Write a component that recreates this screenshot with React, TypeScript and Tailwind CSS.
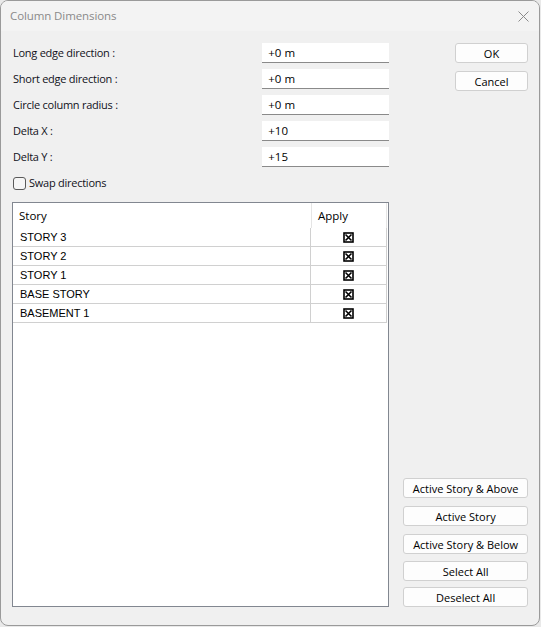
import React from 'react';

const fields = [
  { label: 'Long edge direction :', value: '+0 m' },
  { label: 'Short edge direction :', value: '+0 m' },
  { label: 'Circle column radius :', value: '+0 m' },
  { label: 'Delta X :', value: '+10' },
  { label: 'Delta Y :', value: '+15' },
];

const stories = ['STORY 3', 'STORY 2', 'STORY 1', 'BASE STORY', 'BASEMENT 1'];

const ui = { fontFamily: '"Open Sans", "Noto Sans", sans-serif' };
const classic = { fontFamily: '"Liberation Sans", Arial, sans-serif' };

function CheckedBox() {
  return (
    <svg width="11" height="11" viewBox="0 0 11 11" className="block">
      <rect x="1" y="1" width="9" height="9" fill="white" stroke="black" strokeWidth="1.6" />
      <path d="M2.5 2.5 L8.5 8.5 M8.5 2.5 L2.5 8.5" stroke="black" strokeWidth="1.6" />
    </svg>
  );
}

function Btn({ children, className = '' }: { children: React.ReactNode; className?: string }) {
  return (
    <button
      className={`h-[20px] rounded-[3px] border border-[#d0d0d0] bg-[#fdfdfd] text-[11px] leading-none text-black flex items-center justify-center ${className}`}
      style={ui}
    >
      {children}
    </button>
  );
}

export default function App() {
  return (
    <div className="w-[541px] h-[627px] bg-[#e9e9e9]">
      <div className="w-[540px] h-[626px] rounded-[8px] border border-[#9a9a9a] bg-[#f0f0f0] overflow-hidden flex flex-col">
        {/* Title bar */}
        <div className="h-[30px] bg-[#f3f3f3] flex items-center justify-between pl-[9px] pr-[10px] shrink-0">
          <span className="text-[11.5px] tracking-[-0.1px] text-[#8a8a8a]" style={ui}>Column Dimensions</span>
          <svg width="11" height="11" viewBox="0 0 11 11">
            <path d="M0.5 0.5 L10.5 10.5 M10.5 0.5 L0.5 10.5" stroke="#8a8a8a" strokeWidth="1" />
          </svg>
        </div>

        {/* Body */}
        <div className="flex-1 flex pl-[11px] pr-[11px] pt-[12px] pb-[18px]">
          {/* Left column */}
          <div className="w-[378px] flex flex-col">
            <div className="flex flex-col gap-[6px]">
              {fields.map((f) => (
                <div key={f.label} className="h-[20px] flex items-center justify-between">
                  <span className="text-[11px] tracking-[-0.25px] text-[#101020] pl-[1px] pt-[1px]" style={ui}>{f.label}</span>
                  <div
                    className="w-[127px] h-[20px] bg-white border-b border-[#8a8a8a] flex items-center pl-[6px] text-[11.5px] text-black"
                    style={ui}
                  >
                    {f.value}
                  </div>
                </div>
              ))}
            </div>

            <label className="flex items-center gap-[3px] mt-[10px] h-[13px] pl-[1px]">
              <span className="w-[13px] h-[13px] rounded-[3px] border border-[#5a5a5a] bg-[#f6f6f6]" />
              <span className="text-[11px] tracking-[-0.25px] text-[#101020]" style={ui}>Swap directions</span>
            </label>

            {/* Story table */}
            <div className="mt-[12px] flex-1 bg-white border border-[#828790] pr-[1px]">
              <div className="flex h-[25px]">
                <div className="w-[299px] flex items-center pl-[6px] text-[11.5px] text-black border-r border-[#e5e5e5]" style={ui}>
                  Story
                </div>
                <div className="flex-1 flex items-center pl-[6px] text-[11.5px] text-black border-r border-[#e5e5e5]" style={ui}>
                  Apply
                </div>
              </div>
              {stories.map((s) => (
                <div key={s} className="flex h-[19px] border-b border-[#d0d0d0]">
                  <div className="w-[298px] flex items-center pl-[7px] text-[11px] text-black border-r border-[#d0d0d0]" style={classic}>
                    {s}
                  </div>
                  <div className="flex-1 flex items-center justify-center border-r border-[#d0d0d0] pr-[1px]">
                    <CheckedBox />
                  </div>
                </div>
              ))}
            </div>
          </div>

          {/* Right column */}
          <div className="ml-[14px] w-[125px] flex flex-col justify-between">
            <div className="flex flex-col items-end gap-[8px]">
              <Btn className="w-[73px]">OK</Btn>
              <Btn className="w-[73px]">Cancel</Btn>
            </div>
            <div className="flex flex-col">
              <Btn className="w-full">Active Story &amp; Above</Btn>
              <Btn className="w-full mt-[8px]">Active Story</Btn>
              <Btn className="w-full mt-[8px]">Active Story &amp; Below</Btn>
              <Btn className="w-full mt-[7px]">Select All</Btn>
              <Btn className="w-full mt-[6px]">Deselect All</Btn>
            </div>
          </div>
        </div>
      </div>
    </div>
  );
}
